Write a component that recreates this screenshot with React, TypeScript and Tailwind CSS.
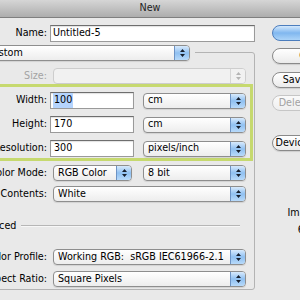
import React from "react";

const Arrows = ({ disabled = false }: { disabled?: boolean }) => (
  <svg width="7" height="10" viewBox="0 0 7 10">
    <path d="M3.5 1 L6 4 H1 Z M1 6 H6 L3.5 9 Z" fill={disabled ? "#b4b4b4" : "#18202e"} />
  </svg>
);

function Popup({ text, className, disabled = false }: { text: string; className: string; disabled?: boolean }) {
  return (
    <div
      className={`h-[16px] flex rounded-[4px] border overflow-hidden shrink-0 ${
        disabled
          ? "border-[#cdcdcd] bg-[#f1f1f1]"
          : "border-[#8e8e8e] bg-gradient-to-b from-white to-[#ededed] shadow-[0_1px_1px_rgba(0,0,0,0.1)]"
      } ${className}`}
    >
      <div className="flex-1 pl-[4px] flex items-center whitespace-pre overflow-hidden">{text}</div>
      <div
        className={`w-[15px] flex items-center justify-center border-l ${
          disabled
            ? "border-[#d6d6d6] bg-[#f1f1f1]"
            : "border-[#6d93c4] bg-gradient-to-b from-[#d8eafc] via-[#8fc0f1] to-[#b8dafa]"
        }`}
      >
        <Arrows disabled={disabled} />
      </div>
    </div>
  );
}

function Field({ children, className }: { children: React.ReactNode; className: string }) {
  return (
    <div
      className={`h-[17px] bg-white border border-[#9a9a9a] border-t-[#6e6e6e] shadow-[inset_0_1px_1px_rgba(0,0,0,0.12)] flex items-center pl-[2px] whitespace-nowrap shrink-0 ${className}`}
    >
      {children}
    </div>
  );
}

function Label({ text, className, gray = false }: { text: string; className: string; gray?: boolean }) {
  return (
    <div className={`flex justify-end whitespace-nowrap shrink-0 ${gray ? "text-[#a3a3a3]" : "text-black"} ${className}`}>
      <span>{text}</span>
    </div>
  );
}

function Btn({ text, kind, className }: { text: string; kind: "ok" | "normal" | "disabled"; className: string }) {
  const look =
    kind === "ok"
      ? "border-[#4c7dbd] bg-gradient-to-b from-[#d3e8fc] via-[#80b7ef] to-[#acd4f8] text-black"
      : kind === "normal"
      ? "border-[#8a8a8a] bg-gradient-to-b from-white to-[#ebebeb] text-black shadow-[0_1px_1px_rgba(0,0,0,0.12)]"
      : "border-[#c6c6c6] bg-gradient-to-b from-[#fafafa] to-[#efefef] text-[#a2a2a2]";
  return (
    <div className={`h-[16px] w-[87px] rounded-full border flex items-center justify-center whitespace-nowrap ${look} ${className}`}>
      {text}
    </div>
  );
}

export default function App() {
  return (
    <div className="w-[300px] h-[300px] overflow-hidden bg-[#e9e9e9] font-['DejaVu_Sans',sans-serif] text-[9.6px] text-black flex flex-col">
      <div className="h-[18px] shrink-0 bg-gradient-to-b from-[#d6d6d6] to-[#adadad] border-b border-[#7f7f7f] flex items-center justify-center text-[#1e1e1e]">
        New
      </div>
      <div className="flex flex-1 min-h-0">
        {/* left panel, real left edge lies offscreen */}
        <div className="w-[325px] -ml-[70px] shrink-0 flex flex-col">
          <div className="flex items-center mt-[7px]">
            <Label text="Name:" className="w-[117px]" />
            <Field className="ml-[3px] w-[205px]">Untitled-5</Field>
          </div>

          <div className="mt-[10px] ml-[10px] w-[315px] h-[238px] border border-[#b3b3b3] rounded-[3px] flex flex-col">
            <div className="-mt-[8px] ml-[40px] pr-[5px] bg-[#e9e9e9] self-start">
              <Popup text="Custom" className="w-[209px]" />
            </div>

            <div className="flex items-center mt-[7px]">
              <Label text="Size:" gray className="w-[106px]" />
              <Popup text="" disabled className="ml-[6px] w-[193px]" />
            </div>

            <div className="ml-[4px] w-[308px] border-[3px] border-[#c6d96f] pt-[5px] pb-[1px] flex flex-col gap-[7px]">
              <div className="flex items-center">
                <Label text="Width:" className="w-[99px]" />
                <Field className="ml-[3px] w-[84px]">
                  <span className="bg-[#b5d4fd] px-[1px]">100</span>
                </Field>
                <Popup text="cm" className="ml-[9px] w-[103px]" />
              </div>
              <div className="flex items-center">
                <Label text="Height:" className="w-[99px]" />
                <Field className="ml-[3px] w-[84px]">
                  <span className="px-[1px]">170</span>
                </Field>
                <Popup text="cm" className="ml-[9px] w-[103px]" />
              </div>
              <div className="flex items-center">
                <Label text="Resolution:" className="w-[99px]" />
                <Field className="ml-[3px] w-[84px]">
                  <span className="px-[1px]">300</span>
                </Field>
                <Popup text="pixels/inch" className="ml-[9px] w-[103px]" />
              </div>
            </div>

            <div className="flex items-center mt-[4px]">
              <Label text="Color Mode:" className="w-[106px]" />
              <Popup text="RGB Color" className="ml-[6px] w-[79px]" />
              <Popup text="8 bit" className="ml-[11px] w-[103px]" />
            </div>
            <div className="flex items-center mt-[5px]">
              <Label text="Background Contents:" className="w-[106px]" />
              <Popup text="White" className="ml-[6px] w-[193px]" />
            </div>

            <div className="flex items-center mt-[18px] h-[12px]">
              <div className="ml-[18px] flex items-center gap-[3px]">
                <svg width="7" height="7" viewBox="0 0 7 7">
                  <path d="M0.5 0.5 L6.5 3.5 L0.5 6.5 Z" fill="#555" />
                </svg>
                <span>Advanced</span>
              </div>
              <div className="ml-[5px] mr-[14px] flex-1 border-t border-b border-t-[#b6b6b6] border-b-[#f7f7f7]" />
            </div>

            <div className="flex items-center mt-[17px]">
              <Label text="Color Profile:" className="w-[106px]" />
              <Popup text="Working RGB:  sRGB IEC61966-2.1" className="ml-[6px] w-[193px]" />
            </div>
            <div className="flex items-center mt-[6px]">
              <Label text="Pixel Aspect Ratio:" className="w-[106px]" />
              <Popup text="Square Pixels" className="ml-[6px] w-[193px]" />
            </div>
          </div>
        </div>

        {/* right column */}
        <div className="flex flex-col pl-[17px] shrink-0">
          <Btn text="OK" kind="ok" className="mt-[7px]" />
          <Btn text="Cancel" kind="normal" className="mt-[7px]" />
          <Btn text="Save Preset..." kind="normal" className="mt-[8px]" />
          <Btn text="Delete Preset..." kind="disabled" className="mt-[7px]" />
          <Btn text="Device Central..." kind="normal" className="mt-[24px]" />
          <div className="w-[87px] text-center leading-[12px] mt-[56px] whitespace-nowrap">Image Size:</div>
          <div className="w-[87px] text-center leading-[12px] mt-[5px] whitespace-nowrap">678.5M</div>
        </div>
      </div>
    </div>
  );
}
